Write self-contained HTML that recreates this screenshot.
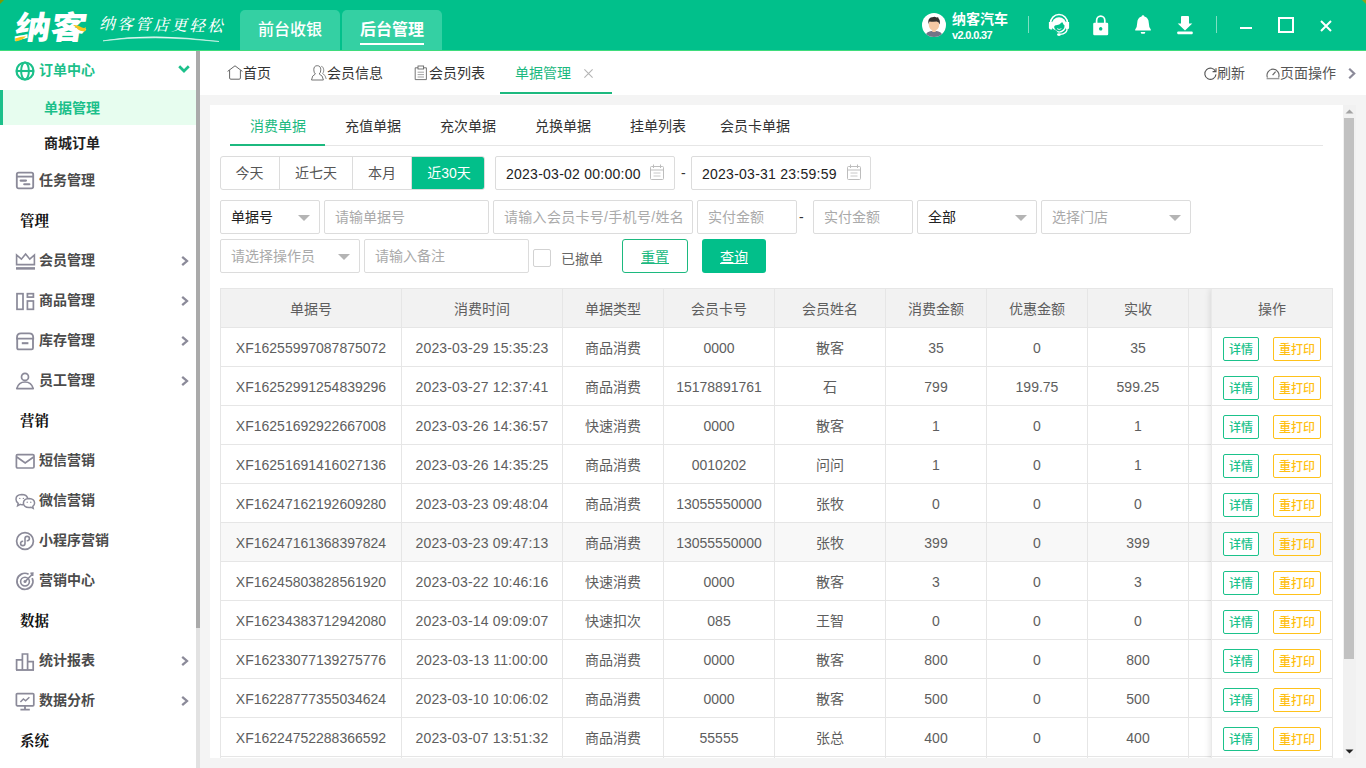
<!DOCTYPE html>
<html lang="zh-CN">
<head>
<meta charset="utf-8">
<title>纳客 - 单据管理</title>
<style>
*{box-sizing:border-box;margin:0;padding:0}
html,body{width:1366px;height:768px;overflow:hidden;background:#f4f4f4}
body{font-family:"Liberation Sans","Noto Sans CJK SC",sans-serif;font-size:14px;color:#333;position:relative}
.t{position:absolute;white-space:nowrap;line-height:20px;height:20px}
svg{position:absolute;overflow:visible}
/* header */
#hdr{position:absolute;left:0;top:0;width:1366px;height:50px;background:#01c08b}
#hline{position:absolute;left:0;top:50px;width:1366px;height:1px;background:#3fdc7c}
.htab{position:absolute;top:10px;height:40px;width:100px;background:#34d0a3;border-radius:5px 5px 0 0;color:#fff;font-size:16px;font-weight:500;line-height:40px;text-align:center}
/* sidebar */
#side{position:absolute;left:0;top:51px;width:196px;height:717px;background:#fff}
#sbar{position:absolute;left:196px;top:51px;width:4px;height:717px;background:#e2e2e2}
#sthumb{position:absolute;left:196px;top:51px;width:4px;height:577px;background:#aaa}
.sm{position:absolute;left:39px;font-weight:bold;font-size:14px;color:#4b4b4b;line-height:20px;height:20px;white-space:nowrap}
.sg{position:absolute;left:20px;font-weight:bold;font-size:14.5px;font-family:'Liberation Serif','Noto Serif CJK SC',serif;color:#111;line-height:20px;height:20px;white-space:nowrap}
/* tab bar */
#tabs{position:absolute;left:200px;top:51px;width:1166px;height:44px;background:#fff}
#tabs .t{font-size:14px;color:#333}
/* panel */
#panel{position:absolute;left:210px;top:105px;width:1133px;height:653px;background:#fff;overflow:hidden}
.inp{position:absolute;height:34px;border:1px solid #dcdcdc;border-radius:2px;background:#fff;font-size:14px;line-height:32px;padding-left:10px;color:#aaa;white-space:nowrap;overflow:hidden}
.inp.v{color:#333}
.caret{position:absolute;width:0;height:0;border-left:6px solid transparent;border-right:6px solid transparent;border-top:6px solid #b4b4b4}
/* table */
.cell{position:absolute;top:0;height:39px;line-height:40px;text-align:center;font-size:14px;color:#5e5e5e;white-space:nowrap;border-right:1px solid #e6e6e6;border-bottom:1px solid #e6e6e6;overflow:hidden}
.hd .cell{background:#f2f2f2}
.row{position:absolute;left:11px;width:1112px;height:39px}
.btn{position:absolute;top:9px;height:24px;line-height:24px;border:1px solid;border-radius:2px;font-size:12px;font-weight:500;text-align:center;background:#fff}
.bg{left:11px;width:36px;border-color:#1bc28b;color:#1bc28b}
.by{left:61px;width:48px;border-color:#ffc21a;color:#ffbf12;background:transparent}

</style>
</head>
<body>
<div id="hdr">
  <div class="t" id="logo" style="left:12px;top:8px;height:40px;line-height:40px;font-size:32px;font-weight:900;color:#fff;letter-spacing:0px;transform:skewX(-9deg) scaleX(1.12);transform-origin:0 100%;font-family:'Liberation Sans','Noto Sans CJK SC',sans-serif">纳客</div>
  <svg style="left:0;top:0" width="240" height="50" viewBox="0 0 240 50">
    <path d="M15 38.5 Q20 36.5 26 36.2 Q22 40.5 15.5 41.5 Z" fill="#f7c51e"/>
    <path d="M73 25 Q78 24.5 82 27.5 Q84.5 28.5 86 27 L85.5 31 Q81 32 78 29.5 Q76 27 73 25 Z" fill="#f7c51e"/>
    <path d="M103 40.8 Q150 32.5 219 41.5 Q150 34.5 103 40.8 Z" fill="#fff" stroke="#fff" stroke-width=".6" opacity=".9"/>
  </svg>
  <div class="t" id="slogan" style="left:98px;top:14px;font-size:15.5px;letter-spacing:2.6px;color:#fff;font-weight:500;font-family:'Liberation Serif','Noto Serif CJK SC',serif;transform:skewX(-14deg) rotate(1.2deg);transform-origin:0 100%">纳客管店更轻松</div>
  <div class="htab" style="left:240px">前台收银</div>
  <div class="htab" style="left:342px;font-weight:bold">后台管理<i style="position:absolute;left:18px;top:33px;width:64px;height:2px;background:#fff"></i></div>

  <!-- avatar -->
  <svg style="left:922px;top:13px" width="24" height="24" viewBox="0 0 24 24">
    <defs><clipPath id="avc"><circle cx="12" cy="12" r="12"/></clipPath></defs>
    <circle cx="12" cy="12" r="12" fill="#fff"/>
    <g clip-path="url(#avc)">
      <path d="M2.5 26 Q3 17.6 12 17.8 Q21 17.6 21.5 26 Z" fill="#737487"/>
      <ellipse cx="12" cy="12" rx="5.2" ry="5.8" fill="#f5c9a4"/><rect x="10.3" y="16" width="3.4" height="3" fill="#f5c9a4"/>
      <path d="M6.4 11.6 Q5 4.2 11.4 4 Q13 3.4 14.4 4.4 Q16.6 3.6 16.6 5.6 Q18.6 7.6 17.6 11.6 Q16.8 8.8 14.6 8.6 Q10 9 7.6 8.4 Q6.6 9.6 6.4 11.6 Z" fill="#33302f"/>
    </g>
  </svg>
  <div class="t" style="left:952px;top:9px;font-size:14px;font-weight:bold;color:#fff">纳客汽车</div>
  <div class="t" style="left:952px;top:25px;font-size:11px;font-weight:bold;color:#fff;letter-spacing:-0.65px">v2.0.0.37</div>
  <i style="position:absolute;left:1028px;top:16px;width:1px;height:17px;background:#7fdfc2"></i>
  <i style="position:absolute;left:1216px;top:16px;width:1px;height:17px;background:#7fdfc2"></i>

  <!-- headset -->
  <svg style="left:1048px;top:13px" width="22" height="24" viewBox="0 0 22 24">
    <path d="M2.4 10.5 A8.6 9 0 0 1 19.6 10.5" fill="none" stroke="#fff" stroke-width="1.5"/>
    <path d="M0.9 9 h3.2 v7.4 h-1.2 a2 2 0 0 1 -2 -2 Z" fill="#fff"/>
    <path d="M21.1 9 h-3.2 v7.4 h1.2 a2 2 0 0 0 2 -2 Z" fill="#fff"/>
    <ellipse cx="11" cy="12" rx="7.4" ry="7.8" fill="#fff"/>
    <path d="M6.2 14.6 Q5.8 12.6 7.6 12.2 Q11.5 12.4 13.6 9.6 Q14.4 8.6 14.8 10 Q15.4 11.8 16.6 12.6 Q16.6 17.4 11.4 18.4 Q7.2 18.2 6.2 14.6 Z" fill="#01c08b"/>
    <path d="M4.2 15.4 Q6 20.2 10.4 19.8 L8 17.6 Z" fill="#01c08b"/>
    <path d="M9 15.6 Q11.2 17 13.4 15.6 Q11.2 17.9 9 15.6 Z" fill="#fff" stroke="#fff" stroke-width=".4"/>
    <path d="M19.2 16.4 Q18.4 20.6 12.4 21.4" fill="none" stroke="#fff" stroke-width="1.4"/>
    <ellipse cx="11" cy="21.6" rx="2" ry="1.4" fill="#fff"/>
  </svg>
  <!-- lock -->
  <svg style="left:1092px;top:14px" width="18" height="22" viewBox="0 0 18 22">
    <path d="M4.6 9.5 V6.5 A4.1 4.3 0 0 1 12.8 6.5 V9.5" fill="none" stroke="#fff" stroke-width="1.7"/>
    <path d="M1.2 10 a1.2 1.2 0 0 1 1.2 -1.2 h12.6 a1.2 1.2 0 0 1 1.2 1.2 v10 a1.2 1.2 0 0 1 -1.2 1.2 h-12.6 a1.2 1.2 0 0 1 -1.2 -1.2 Z M8.7 13.1 a1.7 1.7 0 1 0 0.01 0 Z" fill="#fff" fill-rule="evenodd"/>
  </svg>
  <!-- bell -->
  <svg style="left:1134px;top:14px" width="18" height="22" viewBox="0 0 18 22">
    <path d="M9 1.3 Q10.3 1.3 10.4 2.6 Q14.6 3.8 14.8 9 Q14.9 13.6 16.8 15.6 V16.6 H1.2 V15.6 Q3.1 13.6 3.2 9 Q3.4 3.8 7.6 2.6 Q7.7 1.3 9 1.3 Z" fill="#fff"/>
    <path d="M6.8 17.9 h4.4 v0.6 a1.2 1.2 0 0 1 -1.2 1.2 h-2 a1.2 1.2 0 0 1 -1.2 -1.2 Z" fill="#fff"/>
  </svg>
  <!-- download -->
  <svg style="left:1176px;top:14px" width="18" height="22" viewBox="0 0 18 22">
    <path d="M5 3 a1 1 0 0 1 1 -1 h6 a1 1 0 0 1 1 1 v6.4 h3.3 L9 16.4 L1.7 9.4 H5 Z" fill="#fff"/>
    <rect x="1.3" y="17.4" width="15.4" height="2.8" rx=".8" fill="#fff"/>
  </svg>
  <!-- window controls -->
  <i style="position:absolute;left:1240px;top:27px;width:12px;height:2px;background:#fff"></i>
  <i style="position:absolute;left:1278px;top:17px;width:16px;height:16px;border:2px solid #fff"></i>
  <svg style="left:1320px;top:20px" width="12" height="12" viewBox="0 0 12 12"><path d="M1 1 L11 11 M11 1 L1 11" stroke="#fff" stroke-width="2" fill="none"/></svg>
</div>
<svg style="left:0;top:0" width="4" height="4" viewBox="0 0 4 4"><path d="M0 0 H4 L0 4 Z" fill="#7c9a04"/></svg>
<svg style="left:1362px;top:0" width="4" height="4" viewBox="0 0 4 4"><path d="M0 0 H4 V4 Z" fill="#8aa41a"/></svg>
<div id="hline"></div>

<div id="side"><svg style="left:15px;top:10px" width="20" height="20" viewBox="0 0 20 20"><circle cx="10" cy="10" r="8.5" fill="none" stroke="#1cc08a" stroke-width="2.2"/><ellipse cx="10" cy="10" rx="3.9" ry="8.5" fill="none" stroke="#1cc08a" stroke-width="2"/><path d="M1.4 10 H18.6" stroke="#1cc08a" stroke-width="2.1"/></svg><div class="sm" style="top:9px;color:#1cc08a">订单中心</div><svg style="left:178px;top:14px" width="12" height="8" viewBox="0 0 12 8"><path d="M1.2 1.2 L6 6 L10.8 1.2" fill="none" stroke="#1cc08a" stroke-width="2.7"/></svg><div style="position:absolute;left:0;top:39px;width:196px;height:35px;background:#e7fdef;border-left:3px solid #1cc08a"></div><div class="sm" style="left:44px;top:47px;color:#1cc08a">单据管理</div><div class="sm" style="left:44px;top:82px;color:#222">商城订单</div><svg style="left:15px;top:119px" width="20" height="20" viewBox="0 0 20 20"><rect x="1.8" y="2.6" width="16.4" height="15.8" rx="1.8" fill="none" stroke="#8b8a99" stroke-width="1.84"/><path d="M1.8 6.6 H18.2" stroke="#8b8a99" stroke-width="1.84"/><path d="M5.6 10.6 H11 M9.2 14.2 H14.4" stroke="#8b8a99" stroke-width="2.07" stroke-linecap="round"/></svg><div class="sm" style="top:119px">任务管理</div><div class="sg" style="top:160px">管理</div><svg style="left:15px;top:199px" width="20" height="20" viewBox="0 0 20 20"><path d="M1.6 14.6 V5 L6.4 9.2 L10.6 4 L14.8 9.2 L19.4 5 V14.6 Z" fill="none" stroke="#8b8a99" stroke-width="1.61" stroke-linejoin="miter"/><path d="M1 18.4 H20" stroke="#8b8a99" stroke-width="2.53"/></svg><div class="sm" style="top:199px">会员管理</div><svg style="left:181px;top:205px" width="8" height="10" viewBox="0 0 8 10"><path d="M1.2 0.8 L6 5 L1.2 9.2" fill="none" stroke="#8b8a99" stroke-width="2.3"/></svg><svg style="left:15px;top:239px" width="20" height="20" viewBox="0 0 20 20"><rect x="2" y="3.7" width="6" height="15.6" fill="none" stroke="#8b8a99" stroke-width="1.72"/><rect x="12.4" y="3.7" width="6" height="3.4" fill="none" stroke="#8b8a99" stroke-width="1.72"/><rect x="12.4" y="11" width="6" height="8.3" fill="none" stroke="#8b8a99" stroke-width="1.72"/></svg><div class="sm" style="top:239px">商品管理</div><svg style="left:181px;top:245px" width="8" height="10" viewBox="0 0 8 10"><path d="M1.2 0.8 L6 5 L1.2 9.2" fill="none" stroke="#8b8a99" stroke-width="2.3"/></svg><svg style="left:15px;top:279px" width="20" height="20" viewBox="0 0 20 20"><path d="M2.2 8.4 V18 a1.4 1.4 0 0 0 1.4 1.4 H16.6 a1.4 1.4 0 0 0 1.4 -1.4 V8.4" fill="none" stroke="#8b8a99" stroke-width="1.84"/><path d="M2 8.6 V7.6 Q2 3.4 6 3.4 H14.2 Q18.2 3.4 18.2 7.6 V8.6 Z" fill="none" stroke="#8b8a99" stroke-width="1.84"/><path d="M6.8 13.2 H13.4" stroke="#8b8a99" stroke-width="2.07"/></svg><div class="sm" style="top:279px">库存管理</div><svg style="left:181px;top:285px" width="8" height="10" viewBox="0 0 8 10"><path d="M1.2 0.8 L6 5 L1.2 9.2" fill="none" stroke="#8b8a99" stroke-width="2.3"/></svg><svg style="left:15px;top:319px" width="20" height="20" viewBox="0 0 20 20"><circle cx="10" cy="6.9" r="3.5" fill="none" stroke="#8b8a99" stroke-width="1.72"/><path d="M1.8 18.6 Q3.6 12 10 12 Q16.4 12 18.2 18.6 Z" fill="none" stroke="#8b8a99" stroke-width="1.72" stroke-linejoin="round"/></svg><div class="sm" style="top:319px">员工管理</div><svg style="left:181px;top:325px" width="8" height="10" viewBox="0 0 8 10"><path d="M1.2 0.8 L6 5 L1.2 9.2" fill="none" stroke="#8b8a99" stroke-width="2.3"/></svg><div class="sg" style="top:360px">营销</div><svg style="left:15px;top:400px" width="20" height="20" viewBox="0 0 20 20"><rect x="1.4" y="3.6" width="17.6" height="13.4" rx="1.2" fill="none" stroke="#8b8a99" stroke-width="1.72"/><path d="M1.8 6 L10.2 12 L18.6 6" fill="none" stroke="#8b8a99" stroke-width="1.72"/></svg><div class="sm" style="top:399px">短信营销</div><svg style="left:15px;top:440px" width="20" height="20" viewBox="0 0 20 20"><path d="M8.6 13.6 Q6.4 14 5.2 13.4 L2.6 14.8 L3.2 12.4 Q1 10.8 1 8.2 Q1 3.8 6.8 3.6 Q11.6 3.6 12.6 7.2" fill="none" stroke="#8b8a99" stroke-width="1.49"/><path d="M14 7.6 Q19.4 7.8 19.6 12 Q19.6 14.2 17.8 15.4 L18.2 17.4 L16 16.2 Q14.8 16.6 14 16.6 Q8.6 16.4 8.4 12 Q8.6 7.8 14 7.6 Z" fill="#fff" stroke="#8b8a99" stroke-width="1.49"/><circle cx="4.8" cy="7.4" r=".7" fill="#8b8a99"/><circle cx="8.4" cy="7.4" r=".7" fill="#8b8a99"/><circle cx="12.2" cy="11.2" r=".7" fill="#8b8a99"/><circle cx="15.8" cy="11.2" r=".7" fill="#8b8a99"/></svg><div class="sm" style="top:439px">微信营销</div><svg style="left:15px;top:480px" width="20" height="20" viewBox="0 0 20 20"><circle cx="10" cy="10" r="8.4" fill="none" stroke="#8b8a99" stroke-width="1.72"/><path d="M10 12.4 Q10 14.6 7.8 14.6 Q5.6 14.6 5.6 12.4 Q5.6 10.4 7.6 10.2 M10 12.4 V7.6 Q10 5.4 12.2 5.4 Q14.4 5.4 14.4 7.6 Q14.4 9.6 12.4 9.8" fill="none" stroke="#8b8a99" stroke-width="1.61" stroke-linecap="round"/></svg><div class="sm" style="top:479px">小程序营销</div><svg style="left:15px;top:520px" width="20" height="20" viewBox="0 0 20 20"><path d="M17.2 7 A8 8 0 1 1 13.6 3.2" fill="none" stroke="#8b8a99" stroke-width="1.72"/><circle cx="10" cy="10.6" r="4.4" fill="none" stroke="#8b8a99" stroke-width="1.61"/><circle cx="10" cy="10.6" r="1.5" fill="#8b8a99"/><path d="M10 10.6 L17.4 3.2 M15.4 2.4 L17.8 2.2 L17.6 5" fill="none" stroke="#8b8a99" stroke-width="1.61"/></svg><div class="sm" style="top:519px">营销中心</div><div class="sg" style="top:560px">数据</div><svg style="left:15px;top:600px" width="20" height="20" viewBox="0 0 20 20"><path d="M1.6 19 V8.8 H7.4 V3 H12.6 V19 M12.6 10.6 H18.2 V19 M7.4 8.8 V19" fill="none" stroke="#8b8a99" stroke-width="1.72"/><path d="M1 19 H19" stroke="#8b8a99" stroke-width="1.84"/></svg><div class="sm" style="top:599px">统计报表</div><svg style="left:181px;top:605px" width="8" height="10" viewBox="0 0 8 10"><path d="M1.2 0.8 L6 5 L1.2 9.2" fill="none" stroke="#8b8a99" stroke-width="2.3"/></svg><svg style="left:15px;top:640px" width="20" height="20" viewBox="0 0 20 20"><rect x="1.4" y="2.6" width="17.4" height="12.2" rx="1" fill="none" stroke="#8b8a99" stroke-width="1.72"/><path d="M10 15 V18.4 M5.4 18.6 H14.8" stroke="#8b8a99" stroke-width="1.84"/><path d="M5.4 11 L8.4 8 L10.6 9.8 L14.4 6.2" fill="none" stroke="#8b8a99" stroke-width="1.49"/></svg><div class="sm" style="top:639px">数据分析</div><svg style="left:181px;top:645px" width="8" height="10" viewBox="0 0 8 10"><path d="M1.2 0.8 L6 5 L1.2 9.2" fill="none" stroke="#8b8a99" stroke-width="2.3"/></svg><div class="sg" style="top:680px">系统</div></div>
<div id="sbar"></div><div id="sthumb"></div>
<div id="tabs">
  <!-- coordinates relative to (200,51) -->
  <svg style="left:27px;top:14px" width="16" height="15" viewBox="0 0 16 15"><path d="M0.6 6.4 L8 0.8 L15.4 6.4 M2.6 5.2 V13 Q2.6 14.2 3.8 14.2 H12.2 Q13.4 14.2 13.4 13 V5.2" fill="none" stroke="#555" stroke-width=".9"/></svg>
  <div class="t" style="left:43px;top:12px">首页</div>
  <svg style="left:111px;top:14px" width="16" height="16" viewBox="0 0 16 16"><path d="M6.2 0.7 Q9.8 0.7 9.8 4.8 Q9.8 7.6 8.2 9 Q12 10.2 12.4 15 H0.5 Q0.9 10.2 4.4 9 Q2.8 7.6 2.8 4.8 Q2.8 0.7 6.2 0.7 Z" fill="none" stroke="#666" stroke-width=".9"/><path d="M10.2 1.2 Q12.8 1.8 12.8 5 Q12.8 7.4 11.6 8.6 Q14.6 9.8 15.2 14" fill="none" stroke="#888" stroke-width=".9"/></svg>
  <div class="t" style="left:127px;top:12px">会员信息</div>
  <svg style="left:214px;top:14px" width="14" height="16" viewBox="0 0 14 16"><path d="M4 2.8 H1.2 V14.6 H12.4 V2.8 H9.6" fill="none" stroke="#666" stroke-width=".9"/><rect x="4" y="1" width="5.6" height="3" fill="none" stroke="#666" stroke-width=".9"/><path d="M3.6 7.2 H10 M3.6 9.6 H10 M3.6 12 H10" stroke="#999" stroke-width=".9"/></svg>
  <div class="t" style="left:229px;top:12px">会员列表</div>
  <div class="t" style="left:315px;top:12px;color:#1cb97f">单据管理</div>
  <svg style="left:384px;top:18px" width="9" height="9" viewBox="0 0 9 9"><path d="M0.4 0.4 L8.6 8.6 M8.6 0.4 L0.4 8.6" stroke="#b4b4b4" stroke-width="1.1" fill="none"/></svg>
  <i style="position:absolute;left:300px;top:40.5px;width:112px;height:2px;background:#1cb97f"></i>
  <!-- right -->
  <svg style="left:1004px;top:16px" width="13" height="13" viewBox="0 0 13 13"><path d="M11.6 4.6 A5.6 5.6 0 1 0 12 7.4" fill="none" stroke="#555" stroke-width="1.1"/><path d="M8.6 4.6 H12 V1.2" fill="none" stroke="#555" stroke-width="1.1"/></svg>
  <div class="t" style="left:1017px;top:12px;color:#555">刷新</div>
  <svg style="left:1066px;top:16px" width="14" height="13" viewBox="0 0 14 13"><path d="M1.4 10.6 A6 6.2 0 1 1 12.6 10.6" fill="none" stroke="#666" stroke-width="1.1"/><path d="M0.6 11.6 H13.4" stroke="#999" stroke-width="1.4"/><path d="M6.6 8.2 L9.6 4.6" stroke="#666" stroke-width="1.2"/></svg>
  <div class="t" style="left:1080px;top:12px;color:#555">页面操作</div>
  <svg style="left:1148px;top:17px" width="8" height="11" viewBox="0 0 8 11"><path d="M1.2 0.8 L6.2 5.5 L1.2 10.2" fill="none" stroke="#8b8a99" stroke-width="2.2"/></svg>
</div>

<div id="panel">
<div class="t" style="left:40px;top:11px;color:#1cb97f">消费单据</div>
<div class="t" style="left:135px;top:11px;color:#333">充值单据</div>
<div class="t" style="left:230px;top:11px;color:#333">充次单据</div>
<div class="t" style="left:325px;top:11px;color:#333">兑换单据</div>
<div class="t" style="left:420px;top:11px;color:#333">挂单列表</div>
<div class="t" style="left:510px;top:11px;color:#333">会员卡单据</div>
<i style="position:absolute;left:20px;top:40px;width:1093px;height:1px;background:#e6e6e6"></i>
<i style="position:absolute;left:20px;top:39px;width:95px;height:2px;background:#1cb97f"></i>
<div style="position:absolute;left:10px;top:51px;width:265px;height:34px;border:1px solid #dcdcdc;border-radius:3px;background:#fff;overflow:hidden">
<div style="position:absolute;left:-1px;top:-1px;width:60px;height:34px;line-height:34px;text-align:center;font-size:14px;color:#555;border-right:1px solid #dcdcdc;">今天</div>
<div style="position:absolute;left:59px;top:-1px;width:73px;height:34px;line-height:34px;text-align:center;font-size:14px;color:#555;border-right:1px solid #dcdcdc;">近七天</div>
<div style="position:absolute;left:132px;top:-1px;width:59px;height:34px;line-height:34px;text-align:center;font-size:14px;color:#555;border-right:1px solid #dcdcdc;">本月</div>
<div style="position:absolute;left:191px;top:-1px;width:74px;height:34px;line-height:34px;text-align:center;font-size:14px;background:#02bf8a;color:#fff;">近30天</div>
</div>
<div class="inp v" style="left:285px;top:51px;width:180px;padding-left:10px;letter-spacing:.25px;color:#222;line-height:34px">2023-03-02 00:00:00</div>
<svg style="left:440px;top:59px" width="14" height="16" viewBox="0 0 14 16"><rect x="0.5" y="2.5" width="13" height="13" rx="1" fill="none" stroke="#bdbdbd" stroke-width="1"/><path d="M3.5 0.5 V4 M10.5 0.5 V4 M0.5 6 H13.5" stroke="#bdbdbd" stroke-width="1"/><path d="M3.5 9 H10.5 M3.5 12 H10.5" stroke="#c8c8c8" stroke-width="1"/></svg>
<div class="t" style="left:471px;top:58px;color:#333">-</div>
<div class="inp v" style="left:481px;top:51px;width:180px;padding-left:10px;letter-spacing:.25px;color:#222;line-height:34px">2023-03-31 23:59:59</div>
<svg style="left:637px;top:59px" width="14" height="16" viewBox="0 0 14 16"><rect x="0.5" y="2.5" width="13" height="13" rx="1" fill="none" stroke="#bdbdbd" stroke-width="1"/><path d="M3.5 0.5 V4 M10.5 0.5 V4 M0.5 6 H13.5" stroke="#bdbdbd" stroke-width="1"/><path d="M3.5 9 H10.5 M3.5 12 H10.5" stroke="#c8c8c8" stroke-width="1"/></svg>
<div class="inp v" style="left:10px;top:95px;width:100px;padding-left:10px;color:#222">单据号</div>
<i class="caret" style="left:88px;top:110px"></i>
<div class="inp" style="left:114px;top:95px;width:165px;padding-left:10px;">请输单据号</div>
<div class="inp" style="left:283px;top:95px;width:200px;padding-left:10px;letter-spacing:.3px">请输入会员卡号/手机号/姓名</div>
<div class="inp" style="left:487px;top:95px;width:100px;padding-left:10px;">实付金额</div>
<div class="t" style="left:589px;top:102px;color:#333">-</div>
<div class="inp" style="left:603px;top:95px;width:100px;padding-left:10px;">实付金额</div>
<div class="inp v" style="left:707px;top:95px;width:120px;padding-left:10px;color:#222">全部</div>
<i class="caret" style="left:805px;top:110px"></i>
<div class="inp" style="left:831px;top:95px;width:150px;padding-left:10px;">选择门店</div>
<i class="caret" style="left:959px;top:110px"></i>
<div class="inp" style="left:10px;top:134px;width:140px;padding-left:10px;">请选择操作员</div>
<i class="caret" style="left:128px;top:149px"></i>
<div class="inp" style="left:154px;top:134px;width:165px;padding-left:10px;">请输入备注</div>
<i style="position:absolute;left:323px;top:144px;width:18px;height:18px;border:1px solid #d2d2d2;border-radius:2px;background:#fff"></i>
<div class="t" style="left:351px;top:144px;color:#666">已撤单</div>
<div style="position:absolute;left:412px;top:134px;width:66px;height:34px;line-height:35px;border:1px solid #1cb97f;border-radius:2px;text-align:center;color:#1cb97f;font-size:14px;text-decoration:underline;text-underline-offset:1px;border-radius:3px">重置</div>
<div style="position:absolute;left:492px;top:134px;width:64px;height:34px;line-height:36px;border-radius:2px;text-align:center;color:#fff;background:#02bf8a;font-size:14px;text-decoration:underline;text-underline-offset:1px;border-radius:3px">查询</div>
<div id="tbl" style="position:absolute;left:10px;top:183px;width:1113px;height:480px;border-left:1px solid #e6e6e6;border-top:1px solid #e6e6e6;border-right:1px solid #e6e6e6"></div>
<div class="row hd" style="top:184px"><div class="cell" style="left:0px;width:181px;">单据号</div><div class="cell" style="left:181px;width:161px;">消费时间</div><div class="cell" style="left:342px;width:101px;">单据类型</div><div class="cell" style="left:443px;width:111px;">会员卡号</div><div class="cell" style="left:554px;width:111px;">会员姓名</div><div class="cell" style="left:665px;width:101px;">消费金额</div><div class="cell" style="left:766px;width:101px;">优惠金额</div><div class="cell" style="left:867px;width:101px;">实收</div><div class="cell" style="left:968px;width:60px;"></div></div>
<div class="row " style="top:223px"><div class="cell" style="left:0px;width:181px;">XF16255997087875072</div><div class="cell" style="left:181px;width:161px;letter-spacing:.15px;">2023-03-29 15:35:23</div><div class="cell" style="left:342px;width:101px;">商品消费</div><div class="cell" style="left:443px;width:111px;">0000</div><div class="cell" style="left:554px;width:111px;">散客</div><div class="cell" style="left:665px;width:101px;">35</div><div class="cell" style="left:766px;width:101px;">0</div><div class="cell" style="left:867px;width:101px;">35</div><div class="cell" style="left:968px;width:60px;"></div></div>
<div class="row " style="top:262px"><div class="cell" style="left:0px;width:181px;">XF16252991254839296</div><div class="cell" style="left:181px;width:161px;letter-spacing:.15px;">2023-03-27 12:37:41</div><div class="cell" style="left:342px;width:101px;">商品消费</div><div class="cell" style="left:443px;width:111px;">15178891761</div><div class="cell" style="left:554px;width:111px;">石</div><div class="cell" style="left:665px;width:101px;">799</div><div class="cell" style="left:766px;width:101px;">199.75</div><div class="cell" style="left:867px;width:101px;">599.25</div><div class="cell" style="left:968px;width:60px;"></div></div>
<div class="row " style="top:301px"><div class="cell" style="left:0px;width:181px;">XF16251692922667008</div><div class="cell" style="left:181px;width:161px;letter-spacing:.15px;">2023-03-26 14:36:57</div><div class="cell" style="left:342px;width:101px;">快速消费</div><div class="cell" style="left:443px;width:111px;">0000</div><div class="cell" style="left:554px;width:111px;">散客</div><div class="cell" style="left:665px;width:101px;">1</div><div class="cell" style="left:766px;width:101px;">0</div><div class="cell" style="left:867px;width:101px;">1</div><div class="cell" style="left:968px;width:60px;"></div></div>
<div class="row " style="top:340px"><div class="cell" style="left:0px;width:181px;">XF16251691416027136</div><div class="cell" style="left:181px;width:161px;letter-spacing:.15px;">2023-03-26 14:35:25</div><div class="cell" style="left:342px;width:101px;">商品消费</div><div class="cell" style="left:443px;width:111px;">0010202</div><div class="cell" style="left:554px;width:111px;">问问</div><div class="cell" style="left:665px;width:101px;">1</div><div class="cell" style="left:766px;width:101px;">0</div><div class="cell" style="left:867px;width:101px;">1</div><div class="cell" style="left:968px;width:60px;"></div></div>
<div class="row " style="top:379px"><div class="cell" style="left:0px;width:181px;">XF16247162192609280</div><div class="cell" style="left:181px;width:161px;letter-spacing:.15px;">2023-03-23 09:48:04</div><div class="cell" style="left:342px;width:101px;">商品消费</div><div class="cell" style="left:443px;width:111px;">13055550000</div><div class="cell" style="left:554px;width:111px;">张牧</div><div class="cell" style="left:665px;width:101px;">0</div><div class="cell" style="left:766px;width:101px;">0</div><div class="cell" style="left:867px;width:101px;">0</div><div class="cell" style="left:968px;width:60px;"></div></div>
<div class="row " style="top:418px"><div class="cell" style="left:0px;width:181px;background:#f8f8f8;">XF16247161368397824</div><div class="cell" style="left:181px;width:161px;letter-spacing:.15px;background:#f8f8f8;">2023-03-23 09:47:13</div><div class="cell" style="left:342px;width:101px;background:#f8f8f8;">商品消费</div><div class="cell" style="left:443px;width:111px;background:#f8f8f8;">13055550000</div><div class="cell" style="left:554px;width:111px;background:#f8f8f8;">张牧</div><div class="cell" style="left:665px;width:101px;background:#f8f8f8;">399</div><div class="cell" style="left:766px;width:101px;background:#f8f8f8;">0</div><div class="cell" style="left:867px;width:101px;background:#f8f8f8;">399</div><div class="cell" style="left:968px;width:60px;background:#f8f8f8;"></div></div>
<div class="row " style="top:457px"><div class="cell" style="left:0px;width:181px;">XF16245803828561920</div><div class="cell" style="left:181px;width:161px;letter-spacing:.15px;">2023-03-22 10:46:16</div><div class="cell" style="left:342px;width:101px;">快速消费</div><div class="cell" style="left:443px;width:111px;">0000</div><div class="cell" style="left:554px;width:111px;">散客</div><div class="cell" style="left:665px;width:101px;">3</div><div class="cell" style="left:766px;width:101px;">0</div><div class="cell" style="left:867px;width:101px;">3</div><div class="cell" style="left:968px;width:60px;"></div></div>
<div class="row " style="top:496px"><div class="cell" style="left:0px;width:181px;">XF16234383712942080</div><div class="cell" style="left:181px;width:161px;letter-spacing:.15px;">2023-03-14 09:09:07</div><div class="cell" style="left:342px;width:101px;">快速扣次</div><div class="cell" style="left:443px;width:111px;">085</div><div class="cell" style="left:554px;width:111px;">王智</div><div class="cell" style="left:665px;width:101px;">0</div><div class="cell" style="left:766px;width:101px;">0</div><div class="cell" style="left:867px;width:101px;">0</div><div class="cell" style="left:968px;width:60px;"></div></div>
<div class="row " style="top:535px"><div class="cell" style="left:0px;width:181px;">XF16233077139275776</div><div class="cell" style="left:181px;width:161px;letter-spacing:.15px;">2023-03-13 11:00:00</div><div class="cell" style="left:342px;width:101px;">商品消费</div><div class="cell" style="left:443px;width:111px;">0000</div><div class="cell" style="left:554px;width:111px;">散客</div><div class="cell" style="left:665px;width:101px;">800</div><div class="cell" style="left:766px;width:101px;">0</div><div class="cell" style="left:867px;width:101px;">800</div><div class="cell" style="left:968px;width:60px;"></div></div>
<div class="row " style="top:574px"><div class="cell" style="left:0px;width:181px;">XF16228777355034624</div><div class="cell" style="left:181px;width:161px;letter-spacing:.15px;">2023-03-10 10:06:02</div><div class="cell" style="left:342px;width:101px;">商品消费</div><div class="cell" style="left:443px;width:111px;">0000</div><div class="cell" style="left:554px;width:111px;">散客</div><div class="cell" style="left:665px;width:101px;">500</div><div class="cell" style="left:766px;width:101px;">0</div><div class="cell" style="left:867px;width:101px;">500</div><div class="cell" style="left:968px;width:60px;"></div></div>
<div class="row " style="top:613px"><div class="cell" style="left:0px;width:181px;">XF16224752288366592</div><div class="cell" style="left:181px;width:161px;letter-spacing:.15px;">2023-03-07 13:51:32</div><div class="cell" style="left:342px;width:101px;">商品消费</div><div class="cell" style="left:443px;width:111px;">55555</div><div class="cell" style="left:554px;width:111px;">张总</div><div class="cell" style="left:665px;width:101px;">400</div><div class="cell" style="left:766px;width:101px;">0</div><div class="cell" style="left:867px;width:101px;">400</div><div class="cell" style="left:968px;width:60px;"></div></div>
<div class="row " style="top:652px"><div class="cell" style="left:0px;width:181px;"></div><div class="cell" style="left:181px;width:161px;letter-spacing:.15px;"></div><div class="cell" style="left:342px;width:101px;"></div><div class="cell" style="left:443px;width:111px;"></div><div class="cell" style="left:554px;width:111px;"></div><div class="cell" style="left:665px;width:101px;"></div><div class="cell" style="left:766px;width:101px;"></div><div class="cell" style="left:867px;width:101px;"></div><div class="cell" style="left:968px;width:60px;"></div></div>
<div id="fix" style="position:absolute;left:1001px;top:184px;width:121px;height:480px;background:#fff;box-shadow:-1px 0 6px rgba(0,0,0,.11);clip-path:inset(0 0 0 -10px);border-left:1px solid #e9e9e9">
<div class="cell" style="left:0;top:0;width:120px;background:#f2f2f2;border-right:none">操作</div>
<div class="cell" style="left:0;top:39px;width:120px;border-right:none;"><span class="btn bg">详情</span><span class="btn by">重打印</span></div>
<div class="cell" style="left:0;top:78px;width:120px;border-right:none;"><span class="btn bg">详情</span><span class="btn by">重打印</span></div>
<div class="cell" style="left:0;top:117px;width:120px;border-right:none;"><span class="btn bg">详情</span><span class="btn by">重打印</span></div>
<div class="cell" style="left:0;top:156px;width:120px;border-right:none;"><span class="btn bg">详情</span><span class="btn by">重打印</span></div>
<div class="cell" style="left:0;top:195px;width:120px;border-right:none;"><span class="btn bg">详情</span><span class="btn by">重打印</span></div>
<div class="cell" style="left:0;top:234px;width:120px;border-right:none;background:#f8f8f8;"><span class="btn bg">详情</span><span class="btn by">重打印</span></div>
<div class="cell" style="left:0;top:273px;width:120px;border-right:none;"><span class="btn bg">详情</span><span class="btn by">重打印</span></div>
<div class="cell" style="left:0;top:312px;width:120px;border-right:none;"><span class="btn bg">详情</span><span class="btn by">重打印</span></div>
<div class="cell" style="left:0;top:351px;width:120px;border-right:none;"><span class="btn bg">详情</span><span class="btn by">重打印</span></div>
<div class="cell" style="left:0;top:390px;width:120px;border-right:none;"><span class="btn bg">详情</span><span class="btn by">重打印</span></div>
<div class="cell" style="left:0;top:429px;width:120px;border-right:none;"><span class="btn bg">详情</span><span class="btn by">重打印</span></div>
<div class="cell" style="left:0;top:468px;width:120px;border-right:none;"><span class="btn bg">详情</span><span class="btn by">重打印</span></div>
</div>
</div>
<div id="vsb" style="position:absolute;left:1343px;top:105px;width:13px;height:653px;background:#f1f1f1">
  <i style="position:absolute;left:1px;top:13px;width:10px;height:541px;background:#c1c1c1"></i>
  <svg style="left:2px;top:4px" width="9" height="5" viewBox="0 0 9 5"><path d="M0.5 4.6 L4.5 0.4 L8.5 4.6 Z" fill="#a3a3a3"/></svg>
  <svg style="left:2px;top:644px" width="9" height="5" viewBox="0 0 9 5"><path d="M0.5 0.4 L4.5 4.6 L8.5 0.4 Z" fill="#222"/></svg>
</div>
<div style="position:absolute;left:200px;top:758px;width:1166px;height:10px;background:#f4f4f4"></div>
</body>
</html>
